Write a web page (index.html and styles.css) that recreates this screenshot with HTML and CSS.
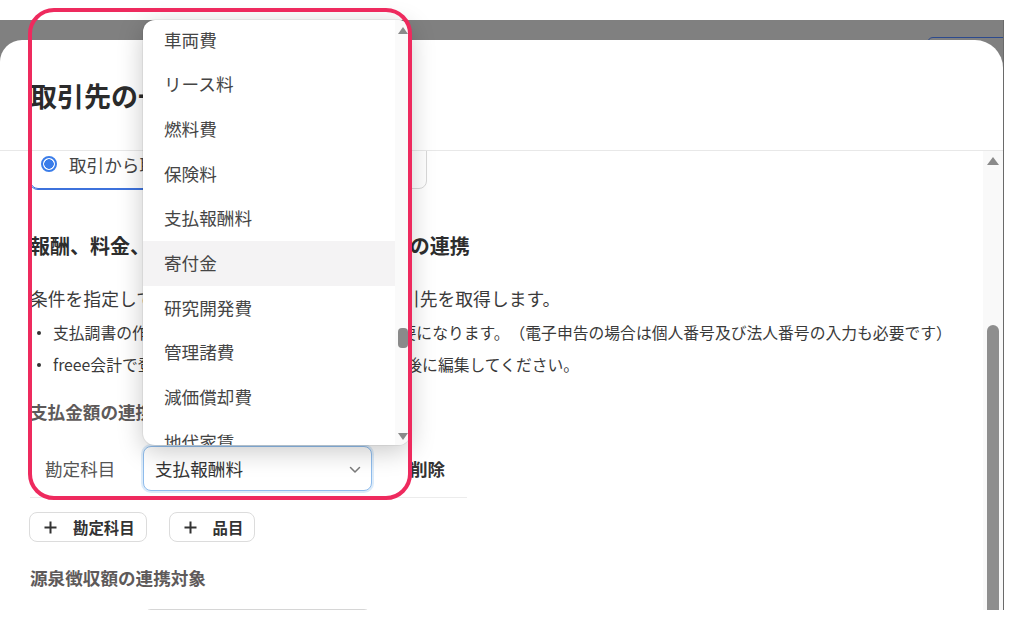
FILE: index.html
```html
<!DOCTYPE html>
<html lang="ja">
<head>
<meta charset="utf-8">
<title>取引先の一括取得</title>
<link rel="stylesheet" href="styles.css">
</head>
<body>
<div class="screen">
  <div class="overlay">
    <div class="bg-button"></div>
    <section class="modal">
      <header class="modal-header">
        <h1 class="modal-title">取引先の一括取得</h1>
      </header>
      <div class="modal-body">
        <div class="modal-content">
          <div class="source-options">
            <label class="option option-selected"><span class="radio"></span><span>取引から取得</span></label>
            <label class="option"><span class="radio radio-off"></span><span>ファイルから取得</span></label>
          </div>
          <h2 class="section-title">報酬、料金、契約金及び賞金の支払調書との連携</h2>
          <p class="lead">条件を指定して、取引から支払調書の対象の取引先を取得します。</p>
          <ul class="notes">
            <li>支払調書の作成には、取引先の住所等の登録が必要になります。（電子申告の場合は個人番号及び法人番号の入力も必要です）</li>
            <li>freee会計で登録済みの取引先と重複の場合は取得後に編集してください。</li>
          </ul>
          <h3 class="group-title">支払金額の連携対象</h3>
          <div class="mapping-row">
            <span class="row-label">勘定科目</span>
            <div class="select select-focused">
              <span class="select-value">支払報酬料</span>
              <svg class="chevron" width="12" height="8" viewBox="0 0 12 8"><path d="M1.5 1.5 L6 6 L10.5 1.5" fill="none" stroke="#7a7a7a" stroke-width="1.5" stroke-linecap="round" stroke-linejoin="round"/></svg>
            </div>
            <button class="delete-link">削除</button>
          </div>
          <div class="add-buttons">
            <button class="add-btn"><svg class="plus" width="13" height="13" viewBox="0 0 13 13"><path d="M6.5 0.5 V12.5 M0.5 6.5 H12.5" stroke="#333" stroke-width="2"/></svg><span>勘定科目</span></button>
            <button class="add-btn"><svg class="plus" width="13" height="13" viewBox="0 0 13 13"><path d="M6.5 0.5 V12.5 M0.5 6.5 H12.5" stroke="#333" stroke-width="2"/></svg><span>品目</span></button>
          </div>
          <h3 class="group-title group-title-2">源泉徴収額の連携対象</h3>
          <div class="mapping-row mapping-row-2">
            <span class="row-label"></span>
            <div class="select"></div>
          </div>
        </div>
        <div class="scrollbar">
          <span class="arrow-up"></span>
          <span class="thumb"></span>
        </div>
      </div>
    </section>
  </div>

  <div class="listbox">
    <ul class="listbox-items">
      <li>車両費</li>
      <li>リース料</li>
      <li>燃料費</li>
      <li>保険料</li>
      <li>支払報酬料</li>
      <li class="item-hover">寄付金</li>
      <li>研究開発費</li>
      <li>管理諸費</li>
      <li>減価償却費</li>
      <li>地代家賃</li>
    </ul>
    <div class="listbox-scroll">
      <span class="mini-arrow-up"></span>
      <span class="mini-thumb"></span>
      <span class="mini-arrow-down"></span>
    </div>
  </div>

  <div class="annotation"></div>
</div>
</body>
</html>
```

FILE: styles.css
```css
* { box-sizing: border-box; }

html, body {
  margin: 0;
  padding: 0;
  background: #ffffff;
}

body {
  font-family: "Noto Sans CJK JP", "Noto Sans", sans-serif;
  color: #333;
  text-spacing-trim: space-all;
}

.screen {
  position: relative;
  width: 1009px;
  height: 618px;
  overflow: hidden;
}

.overlay {
  position: relative;
  margin-top: 20px;
  width: 1004px;
  height: 590px;
  padding-top: 20px;
  background: #808080;
  border-right: 1px solid #6a6a6a;
  overflow: hidden;
}

.bg-button {
  position: absolute;
  left: 927px;
  top: 17px;
  width: 100px;
  height: 40px;
  border: 1px solid #2c4a8e;
  border-radius: 6px;
}

.modal {
  position: relative;
  z-index: 1;
  height: 570px;
  background: #fff;
  border-radius: 22px 28px 0 0;
  display: flex;
  flex-direction: column;
}

.modal-header {
  height: 111px;
  flex-shrink: 0;
  border-bottom: 1px solid #e8e8e8;
  display: flex;
  align-items: center;
  padding-left: 30px;
}

.modal-title {
  margin: 0;
  font-size: 27px;
  font-weight: 700;
  color: #2b2b2b;
}

.modal-body {
  flex: 1;
  min-height: 0;
  display: flex;
  overflow: hidden;
}

.modal-content {
  flex: 1;
  padding-left: 30px;
}

.source-options {
  display: flex;
  gap: 6px;
  width: 397px;
  margin-top: -12px;
}

.option {
  flex: 1;
  height: 50px;
  border: 1px solid #d9d9d9;
  border-radius: 8px;
  display: flex;
  align-items: center;
  gap: 12px;
  padding-left: 10px;
  font-size: 17.6px;
  color: #444;
}

.option-selected {
  border-color: #3d72dc;
  box-shadow: 0 1px 0 #3d72dc;
}

.radio {
  width: 16px;
  height: 16px;
  border-radius: 50%;
  border: 2px solid #3b7de9;
  background: radial-gradient(circle, #3b7de9 0 4.5px, #fff 5px);
  flex-shrink: 0;
}

.radio-off {
  border-color: #999;
  background: #fff;
}

.section-title {
  margin: 43px 0 0;
  font-size: 20px;
  line-height: 28px;
  font-weight: 700;
  color: #2e2e2e;
}

.lead {
  margin: 25px 0 0;
  font-size: 17.8px;
  line-height: 26px;
  color: #3a3a3a;
}

.notes {
  list-style: none;
  margin: 6px 0 0;
  padding: 0;
}

.notes li {
  display: flex;
  align-items: center;
  font-size: 15.8px;
  line-height: 32px;
  color: #3a3a3a;
  white-space: nowrap;
}

.notes li::before {
  content: "";
  width: 4px;
  height: 4px;
  border-radius: 50%;
  background: #333;
  margin: 0 12px 0 7px;
  flex-shrink: 0;
}

.group-title {
  margin: 18px 0 0;
  font-size: 17.6px;
  line-height: 26px;
  font-weight: 700;
  color: #5e5a5a;
}

.group-title-2 {
  margin-top: 23px;
}

.mapping-row {
  width: 437px;
  margin-top: 11px;
  padding: 10px 0 6px 15px;
  border-bottom: 1px solid #ececec;
  display: flex;
  align-items: center;
}

.mapping-row-2 {
  margin-top: 8px;
  border-bottom: none;
}

.row-label {
  width: 98px;
  flex-shrink: 0;
  font-size: 17.6px;
  color: #555;
}

.select {
  width: 229px;
  height: 45px;
  border: 1px solid #d6d6d6;
  border-radius: 8px;
  display: flex;
  align-items: center;
  justify-content: space-between;
  padding: 0 10px 0 11px;
  background: #fff;
}

.select-focused {
  border-color: #8fbcec;
  box-shadow: 0 0 0 2px rgba(140, 188, 236, 0.3);
}

.select-value {
  font-size: 17.6px;
  color: #333;
}

.chevron {
  margin-top: 2px;
}

.delete-link {
  margin-left: 38px;
  padding: 0;
  border: none;
  background: none;
  font-family: inherit;
  font-size: 17.6px;
  font-weight: 700;
  color: #333;
}

.add-buttons {
  display: flex;
  gap: 22px;
  margin-top: 14px;
  margin-left: -1px;
}

.add-btn {
  height: 30px;
  display: flex;
  align-items: center;
  gap: 16px;
  padding: 0 11px 0 14px;
  border: 1px solid #dcdcdc;
  border-radius: 8px;
  background: #fff;
  font-family: inherit;
  font-size: 15.4px;
  font-weight: 700;
  color: #333;
}

.scrollbar {
  width: 20px;
  flex-shrink: 0;
  background: #f9f9f9;
  display: flex;
  flex-direction: column;
  align-items: center;
  padding-top: 6px;
}

.arrow-up {
  width: 0;
  height: 0;
  border-left: 6px solid transparent;
  border-right: 6px solid transparent;
  border-bottom: 8px solid #8a8a8a;
  flex-shrink: 0;
}

.thumb {
  width: 12px;
  height: 320px;
  margin-top: 160px;
  flex-shrink: 0;
  border-radius: 6px;
  background: #8e8e8e;
}

.listbox {
  position: absolute;
  left: 143px;
  top: 20px;
  width: 267px;
  height: 425px;
  background: #fff;
  border-radius: 12px;
  box-shadow: 0 6px 26px rgba(0, 0, 0, 0.22), 0 0 0 1px rgba(0, 0, 0, 0.05);
  display: flex;
  overflow: hidden;
  z-index: 2;
}

.listbox-items {
  flex: 1;
  list-style: none;
  margin: -2.35px 0 0;
  padding: 0;
}

.listbox-items li {
  height: 44.7px;
  line-height: 44.7px;
  padding-left: 21px;
  font-size: 17.6px;
  color: #454545;
}

.listbox-items .item-hover {
  background: #f4f3f4;
}

.listbox-scroll {
  width: 15px;
  flex-shrink: 0;
  background: #fafafa;
  display: flex;
  flex-direction: column;
  align-items: center;
  padding: 7px 0 5px;
}

.mini-arrow-up,
.mini-arrow-down {
  width: 0;
  height: 0;
  border-left: 5px solid transparent;
  border-right: 5px solid transparent;
  flex-shrink: 0;
}

.mini-arrow-up {
  border-bottom: 7px solid #8a8a8a;
}

.mini-arrow-down {
  border-top: 7px solid #8a8a8a;
  margin-top: auto;
}

.mini-thumb {
  width: 10px;
  height: 20px;
  margin-top: 294px;
  border-radius: 4px;
  background: #8a8a8a;
  flex-shrink: 0;
}

.annotation {
  position: absolute;
  left: 28px;
  top: 8px;
  width: 384px;
  height: 492px;
  border: 4.5px solid #ee2a5e;
  border-radius: 26px;
  z-index: 3;
  pointer-events: none;
}
```
